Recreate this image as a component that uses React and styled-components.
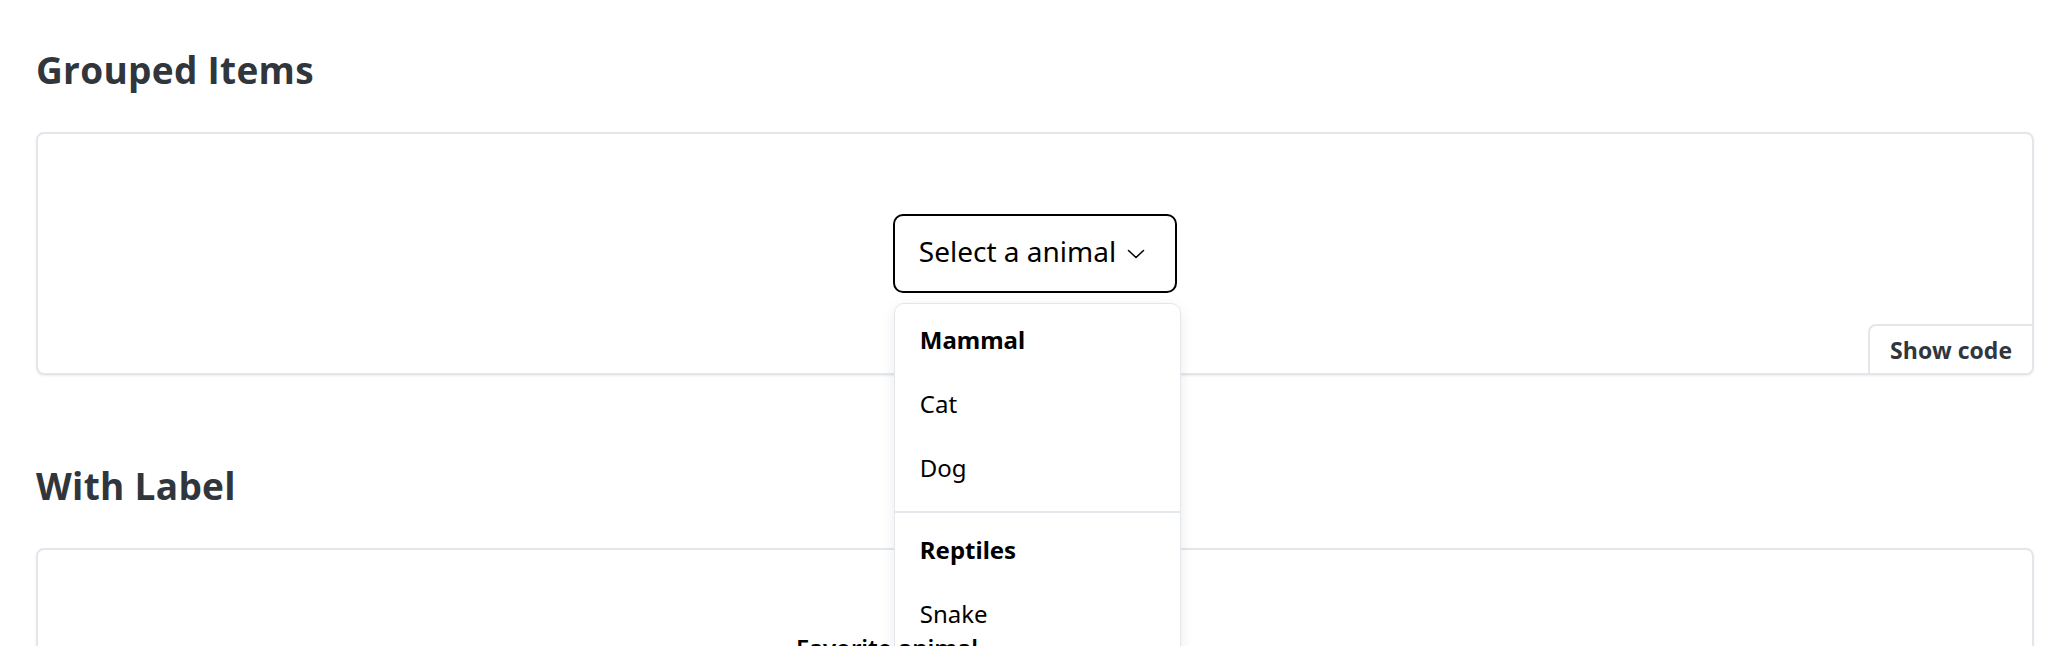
import styled, { createGlobalStyle } from 'styled-components'

const GlobalStyle = createGlobalStyle`
  * { box-sizing: border-box; }
  body {
    margin: 0;
    background: #ffffff;
    font-family: "Noto Sans", "Open Sans", sans-serif;
    overflow: hidden;
  }
`

const groups = [
  { label: 'Mammal', items: ['Cat', 'Dog'] },
  { label: 'Reptiles', items: ['Snake', 'Lizard'] },
]

const Chevron = () => (
  <svg width='24' height='24' viewBox='0 0 24 24' fill='none' stroke='#000' strokeWidth='1.5' strokeLinecap='round' strokeLinejoin='round'>
    <path d='M4.5 8.5 L12 15.5 L19.5 8.5' />
  </svg>
)

const App = () => {
  return (
    <>
      <GlobalStyle />
      <Page>
        <Section>
          <Heading>Grouped Items</Heading>
          <Card>
            <Preview>
              <SelectWrap>
                <SelectButton>
                  <SelectText>Select a animal</SelectText>
                  <Chevron />
                </SelectButton>
                <Menu>
                  {groups.map((group, index) => (
                    <Group key={group.label}>
                      {index > 0 && <Divider />}
                      <GroupLabel>{group.label}</GroupLabel>
                      {group.items.map(item => (
                        <Item key={item}>{item}</Item>
                      ))}
                    </Group>
                  ))}
                </Menu>
              </SelectWrap>
            </Preview>
            <ShowCode>Show code</ShowCode>
          </Card>
        </Section>

        <Section>
          <Heading>With Label</Heading>
          <Card>
            <Preview>
              <Field>
                <FieldLabel>Favorite animal</FieldLabel>
                <SelectButton>
                  <SelectText>Select a animal</SelectText>
                  <Chevron />
                </SelectButton>
              </Field>
            </Preview>
            <ShowCode>Show code</ShowCode>
          </Card>
        </Section>
      </Page>
    </>
  )
}

const Page = styled.div`
  padding: 48px 20px 0 36px;
  display: flex;
  flex-direction: column;
  gap: 89px;
`

const Section = styled.section`
  display: flex;
  flex-direction: column;
  gap: 41px;
`

const Heading = styled.h2`
  margin: 0;
  font-family: "Open Sans", "Noto Sans", sans-serif;
  font-size: 37px;
  line-height: 43px;
  letter-spacing: 0.3px;
  font-weight: 700;
  color: #30363c;
`

const Card = styled.div`
  display: grid;
  border: 2px solid #e3e7eb;
  border-radius: 8px;
  background: #ffffff;
  box-shadow: 0 1px 2px rgba(0, 0, 0, 0.08);
`

const Preview = styled.div`
  grid-area: 1 / 1;
  display: flex;
  justify-content: center;
  padding: 80px 0;
  position: relative;
  z-index: 2;
`

const SelectWrap = styled.div`
  position: relative;
`

const SelectButton = styled.button`
  display: flex;
  align-items: center;
  gap: 8px;
  height: 79px;
  padding: 0 27px 0 24px;
  border: 2px solid #000000;
  border-radius: 10px;
  background: #ffffff;
  color: #000000;
  font-family: "Noto Sans", sans-serif;
  font-size: 28px;
  cursor: pointer;
`

const SelectText = styled.span`
  margin-bottom: 6px;
`

const Menu = styled.div`
  position: absolute;
  top: calc(100% + 10px);
  left: 1px;
  width: 287px;
  padding-top: 4px;
  border: 1px solid #e3e7eb;
  border-radius: 10px;
  background: #ffffff;
  box-shadow: 0 4px 14px rgba(0, 0, 0, 0.08);
`

const Group = styled.div`
  display: flex;
  flex-direction: column;
`

const Divider = styled.div`
  height: 2px;
  margin: 11px 0 5px;
  background: #e5e8ec;
`

const Item = styled.div`
  height: 64px;
  line-height: 64px;
  padding: 0 25px;
  font-family: "Noto Sans", sans-serif;
  font-size: 24px;
  color: #000000;
`

const GroupLabel = styled(Item)`
  font-weight: 700;
`

const ShowCode = styled.button`
  grid-area: 1 / 1;
  justify-self: end;
  align-self: end;
  height: 49px;
  padding: 0 20px;
  border: 0;
  border-top: 2px solid #e3e7eb;
  border-left: 2px solid #e3e7eb;
  border-radius: 8px 0 6px 0;
  background: #ffffff;
  font-family: "Open Sans", sans-serif;
  font-size: 23px;
  font-weight: 700;
  color: #30363c;
  z-index: 1;
`

const Field = styled.div`
  display: flex;
  flex-direction: column;
  gap: 12px;
  width: 478px;
`

const FieldLabel = styled.label`
  font-family: "Noto Sans", sans-serif;
  font-size: 24px;
  line-height: 36px;
  font-weight: 600;
  color: #000000;
`

export default App
